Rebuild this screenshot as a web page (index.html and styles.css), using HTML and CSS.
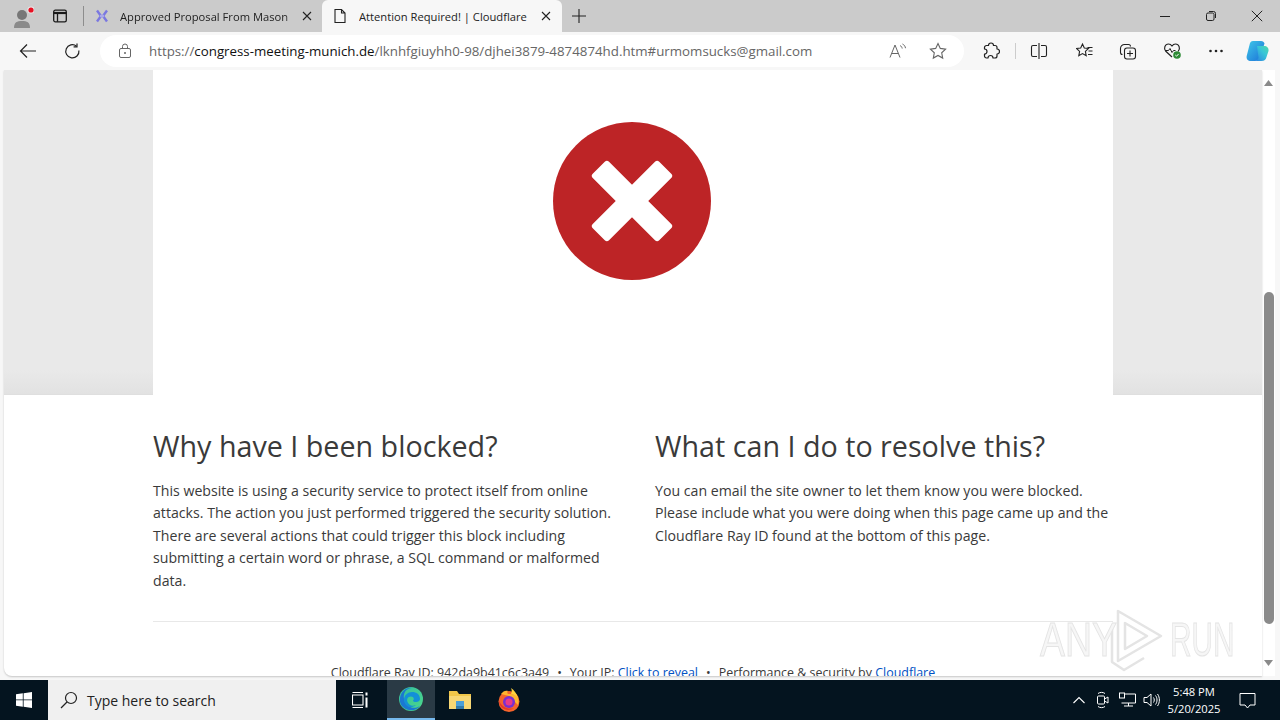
FILE: index.html
```html
<!DOCTYPE html>
<html lang="en">
<head>
<meta charset="utf-8">
<title>Attention Required! | Cloudflare</title>
<link rel="stylesheet" href="styles.css">
</head>
<body>
<div class="screen">
  <header class="tabstrip">
    <div class="profile">
      <svg width="24" height="24" viewBox="-2 0 24 24"><circle cx="10" cy="11" r="5" fill="#777"/><path d="M2 24c0-6 3-7 8-7s8 1 8 7z" fill="#8a8a8a"/><circle cx="19" cy="6" r="3.600" fill="#fff" opacity=".6"/><circle cx="19" cy="6" r="2.600" fill="#e81123"/></svg>
    </div>
    <div class="tabs-btn">
      <svg width="16" height="16" viewBox="0 0 16 16" fill="none" stroke="#1a1a1a" stroke-width="1.300"><rect x="1.700" y="2.200" width="12.600" height="11.600" rx="1.600"/><path d="M1.700 5h12.600" stroke-width="2.200"/><path d="M5.500 5v8.800"/></svg>
    </div>
    <div class="strip-sep"></div>
    <div class="tab">
      <svg class="tab-icon" width="16" height="16" viewBox="0 0 16 16" fill="none" stroke="#7b78e0" stroke-width="2.400"><path d="M3 2.500 L7 8 L3 13.500M13 2.500 L9 8 L13 13.500"/><path d="M6 8h4" stroke="#aaa8ea"/></svg>
      <span class="tab-title tab-fade">Approved Proposal From Mason</span>
      <svg class="tab-x" width="10" height="10" viewBox="0 0 10 10" stroke="#222" stroke-width="1.100"><path d="M1 1l8 8M9 1l-8 8"/></svg>
    </div>
    <div class="tab tab-active">
      <svg class="tab-icon" width="16" height="16" viewBox="0 0 16 16" fill="none" stroke="#222" stroke-width="1.100"><path d="M3 1.500h6.500L13 5v9.500H3zM9.500 1.500V5H13"/></svg>
      <span class="tab-title">Attention Required! | Cloudflare</span>
      <svg class="tab-x" width="10" height="10" viewBox="0 0 10 10" stroke="#222" stroke-width="1.100"><path d="M1 1l8 8M9 1l-8 8"/></svg>
    </div>
    <div class="new-tab">
      <svg width="14" height="14" viewBox="0 0 14 14" stroke="#222" stroke-width="1.100"><path d="M7 0v14M0 7h14"/></svg>
    </div>
    <div class="win-controls">
      <svg width="12" height="12" viewBox="0 0 12 12" stroke="#222" fill="none"><path d="M1 6.500h10"/></svg>
      <svg width="12" height="12" viewBox="0 0 12 12" stroke="#222" fill="none"><rect x="1.500" y="3" width="7.500" height="7.500" rx="1.500"/><path d="M4 1.500h4.500a2 2 0 0 1 2 2V8"/></svg>
      <svg width="12" height="12" viewBox="0 0 12 12" stroke="#222" fill="none"><path d="M.8.8l10.400 10.400M11.200.8.800 11.200"/></svg>
    </div>
  </header>

  <nav class="toolbar">
    <div class="nav-btn nav-back">
      <svg width="18" height="16" viewBox="0 0 18 16" fill="none" stroke="#222" stroke-width="1.200"><path d="M17 8H1.500M8 1.500 1.500 8 8 14.500"/></svg>
    </div>
    <div class="nav-btn">
      <svg width="17" height="17" viewBox="0 0 17 17" fill="none" stroke="#222" stroke-width="1.200"><path d="M14.900 7.500A6.600 6.600 0 1 1 12.500 3.200"/><path d="M13 .5v3.400H9.600"/></svg>
    </div>
    <div class="omnibox">
      <svg class="lock" width="14" height="16" viewBox="0 0 14 16" fill="none" stroke="#666" stroke-width="1"><rect x="1.500" y="5.500" width="11" height="9" rx="1.500"/><path d="M4.500 5.500V3.500a2.500 2.500 0 0 1 5 0v2"/><circle cx="7" cy="10" r="1" fill="#666" stroke="none"/></svg>
      <div class="url"><span class="url-dim">https://</span><span class="url-host">congress-meeting-munich.de</span><span class="url-dim">/lknhfgiuyhh0-98/djhei3879-4874874hd.htm#urmomsucks@gmail.com</span></div>
      <svg class="omni-icon read-icon" width="18" height="16" viewBox="0 0 18 16" fill="none" stroke="#666" stroke-width="1"><path d="M1 14.500 6 2l5 12.500M2.800 10.500h6.400"/><path d="M11 2.500c1.200.6 2 1.600 2.200 3M13.500 1c1.600.8 2.800 2.300 3 4.200"/></svg>
      <svg class="omni-icon" width="18" height="18" viewBox="0 0 18 18" fill="none" stroke="#666" stroke-width="1.100"><path d="M9 1.500l2.300 4.900 5.300.7-3.900 3.700 1 5.300L9 13.500l-4.700 2.600 1-5.300L1.400 7.100l5.300-.7z"/></svg>
    </div>
    <div class="tool-icons">
      <svg width="18" height="18" viewBox="0 0 18 18" fill="none" stroke="#222" stroke-width="1.200" stroke-linejoin="round"><path d="M6.500 3.500a2.500 2.500 0 0 1 5 0h1.500a2 2 0 0 1 2 2V7a2.500 2.500 0 0 1 0 5v2a2 2 0 0 1-2 2h-2a2.500 2.500 0 0 0-5 0H4.500a2 2 0 0 1-2-2v-2a2.500 2.500 0 0 0 0-5V5.500a2 2 0 0 1 2-2z"/></svg>
      <span class="tool-sep"></span>
      <svg width="18" height="18" viewBox="0 0 18 18" fill="none" stroke="#222" stroke-width="1.100"><path d="M9 1v16M7 3.500H3a1.500 1.500 0 0 0-1.500 1.500v8A1.500 1.500 0 0 0 3 14.500h4M11 3.500h4A1.500 1.500 0 0 1 16.500 5v8a1.500 1.500 0 0 1-1.500 1.500h-4"/></svg>
      <svg class="fav" width="18" height="18" viewBox="0 0 18 18" fill="none" stroke="#222" stroke-width="1.100"><path d="M6.500 2l1.800 4 4.200.5-3.100 2.900.8 4.300-3.700-2.100-3.700 2.100.8-4.300L.5 6.500 4.700 6z"/><path d="M11.500 5.500h5M12.500 9h4M12 12.500h4.500"/></svg>
      <svg class="coll" width="18" height="18" viewBox="0 0 18 18" fill="none" stroke="#222" stroke-width="1.100"><rect x="5.500" y="6" width="11" height="11" rx="2.500"/><path d="M11 8.500v6M8 11.500h6"/><path d="M3.500 12.500A2 2 0 0 1 1.500 10.500V6.500a4 4 0 0 1 4-4h4a2 2 0 0 1 2 2"/></svg>
      <svg width="20" height="18" viewBox="0 0 20 18" fill="none"><path d="M9 15 2.800 9.300C.2 6.500 2 2 5.500 2 7.300 2 8.300 3 9 4c.7-1 1.700-2 3.500-2 3.500 0 5.300 4.500 2.700 7.300" stroke="#222" stroke-width="1.200"/><path d="M2 8.500h3.500l1.500-2 2 4 1.500-2h2" stroke="#222" stroke-width="1"/><circle cx="14" cy="13" r="3.800" fill="#2e8b36"/><path d="M12.300 13l1.200 1.200 2.200-2.300" stroke="#fff" stroke-width="1"/></svg>
      <svg class="dots" width="16" height="18" viewBox="0 0 16 18" fill="#222"><circle cx="2.500" cy="9" r="1.300"/><circle cx="8" cy="9" r="1.300"/><circle cx="13.500" cy="9" r="1.300"/></svg>
      <svg class="copilot" width="26" height="24" viewBox="0 0 26 24"><defs><linearGradient id="cpa" x1="0" y1="0" x2="1" y2="1"><stop offset="0" stop-color="#3fc8e8"/><stop offset="1" stop-color="#1a6fd8"/></linearGradient><linearGradient id="cpb" x1="0" y1="1" x2="1" y2="0"><stop offset="0" stop-color="#2b7fe0"/><stop offset=".6" stop-color="#37c6d8"/><stop offset="1" stop-color="#4fd8a8"/></linearGradient></defs><path d="M8 2h8c2 0 3 1 3.500 2.500L15 18c-.7 2.500-2.500 4-5 4H6c-3 0-5-2-4.300-5L4.500 6C5 3.500 6 2 8 2z" fill="url(#cpa)"/><path d="M12 7h7c3 0 5 2 4.500 5l-2 6c-.6 2.500-2 4-5 4h-7c2 0 3.500-1.500 4-3.500z" fill="url(#cpb)"/></svg>
    </div>
  </nav>

  <main class="viewport">
    <div class="page">
      <div class="page-scroll">
        <section class="banner">
          <div class="banner-side"></div>
          <div class="banner-center">
            <svg class="error-icon" width="158" height="158" viewBox="0 0 158 158"><circle cx="79" cy="79" r="79" fill="#bd2426"/><g fill="#fff" transform="rotate(45 79 79)"><rect x="67.500" y="32" width="23" height="94" rx="3"/><rect x="32" y="67.500" width="94" height="23" rx="3"/></g></svg>
          </div>
          <div class="banner-side"></div>
        </section>
        <section class="info">
          <div class="columns">
            <div>
              <h2 class="info-title">Why have I been blocked?</h2>
              <p class="info-text">This website is using a security service to protect itself from online<br>attacks. The action you just performed triggered the security solution.<br>There are several actions that could trigger this block including<br>submitting a certain word or phrase, a SQL command or malformed<br>data.</p>
            </div>
            <div>
              <h2 class="info-title">What can I do to resolve this?</h2>
              <p class="info-text">You can email the site owner to let them know you were blocked.<br>Please include what you were doing when this page came up and the<br>Cloudflare Ray ID found at the bottom of this page.</p>
            </div>
          </div>
          <div class="rule"></div>
          <p class="cf-footer">Cloudflare Ray ID: 942da9b41c6c3a49<span class="dot">•</span>Your IP: <a class="link">Click to reveal</a><span class="dot">•</span>Performance &amp; security by <a class="link">Cloudflare</a></p>
        </section>
      </div>
      <div class="watermark">
        <span class="wm-any">ANY</span>
        <svg width="53" height="64" viewBox="0 0 53 64" fill="none" stroke="#e4e4e4" stroke-width="2.500" stroke-linejoin="round"><path d="M8 3v50l43-25z"/><path d="M15 15v26l22-13z"/><path d="M2 20v34l12 8 20-12"/></svg>
        <span class="wm-run">RUN</span>
      </div>
    </div>
    <div class="scrollbar">
      <svg class="sb-arrow" width="9" height="6" viewBox="0 0 9 6" fill="#8a8a8a"><path d="M0 6l4.500-6L9 6z"/></svg>
      <div class="sb-track"><div class="sb-thumb"></div></div>
      <svg class="sb-arrow" width="9" height="6" viewBox="0 0 9 6" fill="#8a8a8a"><path d="M0 0l4.500 6L9 0z"/></svg>
    </div>
  </main>

  <footer class="taskbar">
    <div class="start">
      <svg width="16" height="16" viewBox="0 0 16 16" fill="#fff"><path d="M0 2.300 6.800 1.300v6.200H0zM7.600 1.200 16 0v7.500H7.600zM0 8.300h6.800v6.400L0 13.700zM7.600 8.300H16V16l-8.400-1.200z"/></svg>
    </div>
    <div class="search">
      <svg width="18" height="18" viewBox="0 0 18 18" fill="none" stroke="#222" stroke-width="1.200"><circle cx="11" cy="7" r="5.500"/><path d="M7 11l-6 6"/></svg>
      <span>Type here to search</span>
    </div>
    <div class="task-btn">
      <svg width="16" height="16" viewBox="0 0 16 16" fill="none" stroke="#fff" stroke-width="1.100"><path d="M.5 3h10.500v10H.5zM.5 .5h10.500M.5 15.500h10.500"/><path d="M14.500 .5v3M14.500 5.500v10" stroke-width="2"/></svg>
    </div>
    <div class="task-btn task-active">
      <svg width="24" height="24" viewBox="0 0 24 24"><defs><linearGradient id="eg" x1="0" y1="0" x2="1" y2="1"><stop offset="0" stop-color="#35c1a0"/><stop offset="1" stop-color="#4bd68a"/></linearGradient></defs><circle cx="12" cy="12" r="12" fill="url(#eg)"/><path d="M1 11C2 4 8 0 13 1c-6 0-9 5-8 11 1 6 8 12 16 7-3 4-8 5-11 4C4 22 0 17 1 11z" fill="#1b77d2"/><path d="M5 13c0-5 4-8 8-8 4.500 0 8 2.500 8 7 0 2-2 3-4 3-1.500 0-3-.5-3-1.500 1.500-1 1-4-2-4-3.500 0-4.500 3-3.500 5.500 1 2.500 4 5 8.500 3-6 5-12 0-12-5z" fill="#1390d8"/></svg>
    </div>
    <div class="task-btn">
      <svg width="24" height="22" viewBox="0 0 24 22"><path d="M1 2h8l2 3h12v15H1z" fill="#f0c649"/><rect x="1" y="7" width="22" height="13" fill="#f7d774"/><rect x="8" y="12" width="8" height="5" fill="#4a9fd8"/><rect x="8" y="17" width="8" height="3" fill="#3278a8"/></svg>
    </div>
    <div class="task-btn">
      <svg width="24" height="24" viewBox="0 0 24 24"><circle cx="12" cy="13.500" r="10.500" fill="#f5642b"/><path d="M4 6C6 3 9 2 11 3c-1 1-1 2 0 3 3 0 7 0 9 2 2 3 2 6 1 9L12 8z" fill="#ffb52e"/><path d="M14 0c3 2 6 6 7 10-2-3-5-4-7-4 1-2 1-4 0-6z" fill="#ffd23e"/><circle cx="12" cy="14" r="6" fill="#7a2fd0"/><circle cx="12" cy="14" r="3.500" fill="#e8398b"/><path d="M2 12c2 7 9 10 15 8-5 4-15 2-15-8z" fill="#e5352c"/></svg>
    </div>
    <div class="tray">
      <span class="tray-item"><svg width="12" height="8" viewBox="0 0 12 8" fill="none" stroke="#fff" stroke-width="1.100"><path d="M.5 7 6 1.500 11.500 7"/></svg></span>
      <span class="tray-item"><svg width="14" height="18" viewBox="0 0 14 18" fill="none" stroke="#fff" stroke-width="1"><rect x="1.500" y="5" width="7" height="8" rx="1"/><path d="M8.500 8l3.500-2v6l-3.500-2M2 2.500c2-1.500 5-1.500 7 0M2 15.500c2 1.500 5 1.500 7 0"/></svg></span>
      <span class="tray-item"><svg width="17" height="16" viewBox="0 0 17 16" fill="none" stroke="#fff" stroke-width="1"><path d="M2.500 2h14v9h-14M5 14h9M9.500 11v3"/><rect x=".5" y="1" width="5" height="5" fill="#04141f"/></svg></span>
      <span class="tray-item"><svg width="17" height="16" viewBox="0 0 17 16" fill="none" stroke="#fff" stroke-width="1"><path d="M1 5.500h3l4-3.500v12l-4-3.500H1zM10.500 5.500c1 1.500 1 3.500 0 5M12.500 3.500c2 2.500 2 6.500 0 9M14.500 2c2.500 3.500 2.500 8.500 0 12"/></svg></span>
    </div>
    <div class="clock"><span>5:48 PM</span><span>5/20/2025</span></div>
    <div class="notify">
      <svg width="17" height="17" viewBox="0 0 17 17" fill="none" stroke="#fff" stroke-width="1"><path d="M1 1.500h15v11.500h-5l-2.500 3-2.500-3H1z"/></svg>
    </div>
  </footer>
</div>
</body>
</html>
```

FILE: styles.css
```css
* { box-sizing: border-box; }
html, body { margin: 0; padding: 0; height: 100%; overflow: hidden; }
body { font-family: "Open Sans", "Noto Sans", sans-serif; color: #222; }
.screen { display: flex; flex-direction: column; width: 1280px; height: 720px; }

.tabstrip { flex: 0 0 32px; height: 32px; background: #cbcbcb; display: flex; align-items: center; }
.profile { width: 44px; height: 32px; display: flex; align-items: center; justify-content: center; flex: none; }
.tabs-btn { width: 32px; display: flex; justify-content: center; flex: none; }
.strip-sep { width: 1px; height: 20px; background: #8d8d8d; margin: 0 7px; flex: none; }
.tab { width: 231px; height: 32px; display: flex; align-items: center; padding: 0 10px 0 3px; flex: none; }
.tab-active { width: 240px; background: #f7f7f7; border-radius: 6px 6px 0 0; padding: 0 11px 0 10px; }
.tab-icon { flex: none; margin-right: 10px; }
.tab-active .tab-icon { margin-right: 11px; }
.tab-title { flex: 1; font-size: 11.200px; white-space: nowrap; overflow: hidden; color: #222; }
.tab-fade { -webkit-mask-image: linear-gradient(to right, #000 90%, transparent); mask-image: linear-gradient(to right, #000 90%, transparent); }
.tab-x { flex: none; }
.new-tab { width: 34px; display: flex; justify-content: center; flex: none; }
.win-controls { margin-left: auto; display: flex; gap: 34px; align-items: center; padding-right: 17px; }

.toolbar { flex: 0 0 38px; height: 38px; background: #f7f7f7; display: flex; align-items: center; }
.nav-btn { width: 44px; display: flex; justify-content: center; flex: none; }
.nav-back { margin-left: 6px; }
.omnibox { width: 864px; height: 32px; margin-left: 6px; background: #fff; border-radius: 16px; display: flex; align-items: center; padding: 0 17px 0 18px; flex: none; }
.lock { flex: none; }
.url { flex: 1; margin-left: 17px; font-size: 13.300px; white-space: nowrap; overflow: hidden; }
.url-dim { color: #666; }
.url-host { color: #111; }
.omni-icon { flex: none; }
.read-icon { margin-right: 22px; }
.tool-icons { display: flex; align-items: center; margin-left: 18px; gap: 26px; }
.tool-sep { width: 1px; height: 16px; background: #ccc; margin: 0 -11.500px; }
.fav { margin-left: 2px; }
.coll { margin-left: -1px; }
.dots { flex: none; margin-left: -1px; }
.copilot { margin-left: -5px; flex: none; }

.viewport { flex: 0 0 610px; height: 610px; background: #f7f7f7; display: flex; padding-left: 4px; overflow: hidden; }
.page { position: relative; width: 1258px; height: 606px; background: #fff; border-radius: 0 0 0 8px; overflow: hidden; flex: none; box-shadow: 0 1px 2px rgba(0,0,0,.2); }
.page-scroll { height: 610px; }
.banner { display: flex; height: 325px; background: linear-gradient(to bottom, #e9e9e9 0, #e9e9e9 300px, #e2e2e2 324px, #dcdcdc 325px); }
.banner-side { flex: 0 0 149px; }
.banner-center { flex: 0 0 960px; background: #fff; display: flex; justify-content: center; align-items: flex-start; padding: 52px 2px 0 0; }
.error-icon { display: block; }

.info { padding: 0 149px; }
.columns { display: grid; grid-template-columns: 460px 458px; column-gap: 42px; padding-top: 32px; height: 226px; }
.info-title { margin: 0; font-size: 28.700px; font-weight: 400; line-height: 38px; color: #3a3a3a; white-space: nowrap; }
.info-text { margin: 14.600px 0 0; font-size: 14.150px; line-height: 22.500px; color: #3a3a3a; white-space: nowrap; }
.rule { height: 1px; background: #e8e8e8; }
.cf-footer { margin: 42px 0 0; text-align: center; font-size: 12.450px; line-height: 18px; color: #3a3a3a; white-space: nowrap; }
.dot { margin: 0 8px; }
.link { color: #0051c3; }

.watermark { position: absolute; left: 1036px; top: 538px; display: flex; align-items: center; font-family: "Liberation Sans", sans-serif; font-size: 48px; line-height: 64px; color: #f6f6f6; -webkit-text-stroke: 1px #e4e4e4; }
.wm-any { width: 70px; display: block; transform: scaleX(.78); transform-origin: left center; }
.wm-run { width: 62px; margin-left: 7px; display: block; transform: scaleX(.62); transform-origin: left center; }

.scrollbar { width: 13px; height: 606px; background: #fff; display: flex; flex-direction: column; align-items: center; flex: none; padding: 10px 0; }
.sb-arrow { flex: none; }
.sb-track { flex: 1; width: 100%; display: flex; justify-content: center; padding-top: 206px; }
.sb-thumb { width: 10px; height: 332px; background: #8a8a8a; border-radius: 5px; }

.taskbar { flex: 0 0 40px; height: 40px; background: #04141f; display: flex; align-items: center; color: #fff; }
.start { width: 48px; display: flex; justify-content: center; flex: none; }
.search { width: 288px; height: 40px; background: #f0f0f0; display: flex; align-items: center; gap: 9px; padding-left: 12px; color: #222; font-size: 14px; flex: none; }
.task-btn { width: 48px; height: 40px; display: flex; justify-content: center; align-items: center; flex: none; }
.task-btn + .task-btn { margin-left: 1px; }
.task-btn + .task-active { margin-left: 3px; }
.task-active { background: #2a3a45; border-bottom: 2px solid #76b9ed; }
.tray { margin-left: auto; display: flex; align-items: center; }
.tray-item { width: 24px; display: flex; justify-content: center; }
.clock { width: 62px; display: flex; flex-direction: column; align-items: center; font-size: 11.200px; line-height: 17px; }
.notify { width: 44px; margin-right: 11px; display: flex; justify-content: center; flex: none; }
```
